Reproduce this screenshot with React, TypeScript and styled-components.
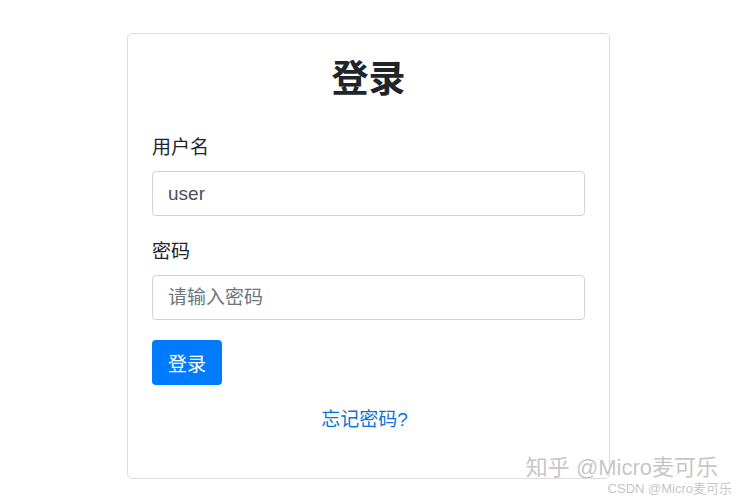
import styled, { createGlobalStyle } from 'styled-components';

const GlobalStyle = createGlobalStyle`
    html, body {
        margin: 0;
        padding: 0;
        background: #fff;
    }
    body {
        font-family: "Liberation Sans", "Noto Sans CJK SC", sans-serif;
        color: #212529;
    }
    * { box-sizing: border-box; }
`;

const Page = styled.div`
    position: relative;
    width: 736px;
    height: 500px;
    padding-top: 33px;
    padding-left: 127px;
    overflow: hidden;
`;

const Card = styled.div`
    width: 483px;
    height: 446px;
    border: 1px solid #dcdcdc;
    border-radius: 5px;
    padding: 24px 24px;
    display: flex;
    flex-direction: column;
`;

const Title = styled.h2`
    margin: 0 0 33px;
    font-size: 37px;
    font-weight: 700;
    line-height: 43px;
    text-align: center;
    color: #212529;
`;

const Group = styled.div`
    display: flex;
    flex-direction: column;
    margin-bottom: 22px;
`;

const Label = styled.label`
    font-size: 19px;
    line-height: 27px;
    margin-bottom: 10px;
`;

const Input = styled.input`
    width: 100%;
    height: 45px;
    padding: 0 15px;
    font-family: inherit;
    font-size: 19px;
    color: #495057;
    border: 1px solid #ced4da;
    border-radius: 4px;
    outline: none;

    &::placeholder {
        color: #6c757d;
    }
`;

const SubmitButton = styled.button`
    align-self: flex-start;
    width: 70px;
    height: 45px;
    margin-top: -2px;
    border: none;
    border-radius: 4px;
    background: #007bff;
    color: #fff;
    font-family: inherit;
    font-size: 19px;
    cursor: pointer;
`;

const Forgot = styled.a`
    align-self: center;
    margin-top: 21px;
    margin-right: 8px;
    font-size: 19px;
    line-height: 27px;
    color: #0a74d8;
    text-decoration: none;
    cursor: pointer;
`;

const Watermark = styled.div<{ size: number; right: number; bottom: number }>`
    position: absolute;
    right: ${p => p.right}px;
    bottom: ${p => p.bottom}px;
    font-size: ${p => p.size}px;
    line-height: 1;
    color: rgba(190, 190, 190, 0.9);
    white-space: nowrap;
    pointer-events: none;
`;

export default function App() {
    return (
        <Page>
            <GlobalStyle />
            <Card>
                <Title>登录</Title>
                <Group>
                    <Label>用户名</Label>
                    <Input defaultValue="user" />
                </Group>
                <Group>
                    <Label>密码</Label>
                    <Input type="password" placeholder="请输入密码" />
                </Group>
                <SubmitButton>登录</SubmitButton>
                <Forgot>忘记密码?</Forgot>
            </Card>
            <Watermark size={22} right={18} bottom={21}>知乎 @Micro麦可乐</Watermark>
            <Watermark size={13} right={4} bottom={5}>CSDN @Micro麦可乐</Watermark>
        </Page>
    );
}
